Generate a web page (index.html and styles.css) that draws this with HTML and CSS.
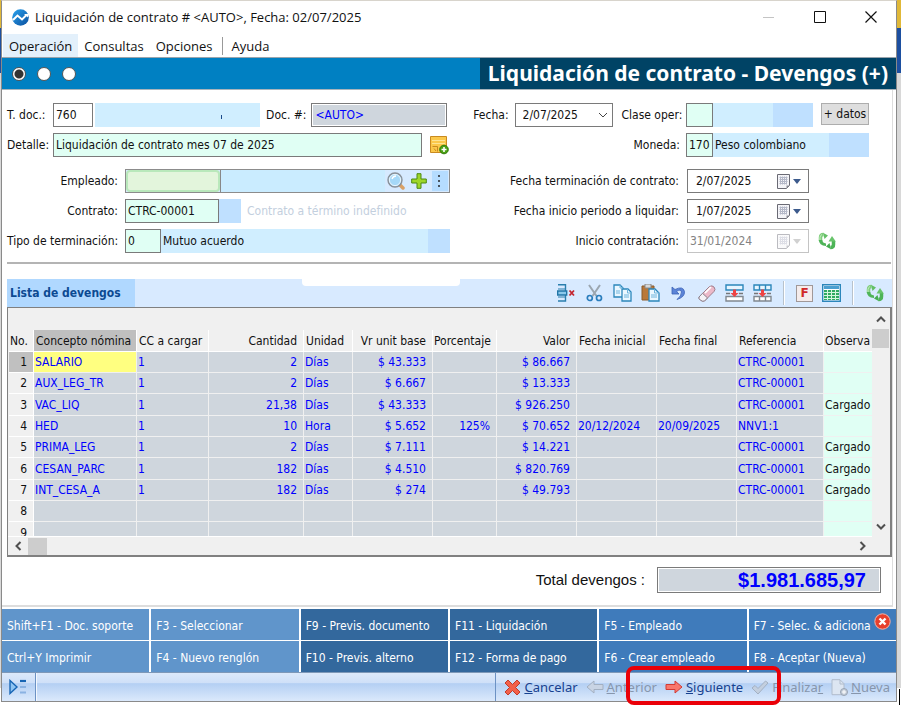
FILE: index.html
```html
<!DOCTYPE html>
<html lang="es">
<head>
<meta charset="utf-8">
<title>Liquidación de contrato</title>
<link rel="stylesheet" href="styles.css">
</head>
<body>
<svg class="defs" width="0" height="0" aria-hidden="true">
  <defs>
    <linearGradient id="gBlue" x1="0" y1="0" x2="1" y2="1"><stop offset="0" stop-color="#2aa3ee"/><stop offset="1" stop-color="#0b4f9e"/></linearGradient>
    <symbol id="refresh" viewBox="0 0 18 18">
      <path d="M2.500 9V5.500Q2.500 2.500 5.500 2.500" fill="none" stroke="#7fce7c" stroke-width="3.500"/>
      <path d="M5 .700 10 3.500 6.500 7z" fill="#63bf66"/>
      <path d="M.8 8h3.500q.2 3 3.700 3.500v2.500Q1 13.500.8 8z" fill="#4fb458"/>
      <path d="M15.500 9v3.500q0 3-3 3" fill="none" stroke="#4db457" stroke-width="3.500"/>
      <path d="M13 17.300 8 14.500l3.500-3.500z" fill="#45ad50"/>
      <path d="M10.500 9.500 14 4l3.800 5.500z" fill="#68c46b"/>
      <path d="M2 8V5.500q0-2 2-3" fill="none" stroke="#c7edc2"/>
    </symbol>
    <symbol id="cal" viewBox="0 0 13 15">
      <path d="M.5.500h12v11l-3 3H.5z" fill="#f4f4f8" stroke="#6a6a74"/>
      <path d="M2.500 3.500h8M2.500 5.500h8M2.500 7.500h8M2.500 9.500h7M3.500 2.500v8M5.500 2.500v8M7.500 2.500v8M9.500 2.500v8" stroke="#b4b8c8"/>
      <path d="M12.500 11.500h-3v3z" fill="#8a8a94"/>
    </symbol>
  </defs>
</svg>
<div class="window">
  <header class="titlebar">
    <svg width="17" height="17" viewBox="0 0 17 17"><circle cx="8.500" cy="8.500" r="8.300" fill="url(#gBlue)"/><path d="M1 11 5.500 6.500 10 10.500 15 5.500" fill="none" stroke="#fff" stroke-width="2"/><path d="M12 5h4v3.500z" fill="#fff"/></svg>
    <span class="caption">Liquidación de contrato # &lt;AUTO&gt;, Fecha: 02/07/2025</span>
    <button class="winbtn" aria-label="Minimizar"><svg width="12" height="12"><path d="M0 6.500h11" stroke="#c4c4c4"/></svg></button>
    <button class="winbtn" aria-label="Maximizar"><svg width="12" height="12"><path d="M.5.500h11v11H.5z" fill="none" stroke="#111"/></svg></button>
    <button class="winbtn" aria-label="Cerrar"><svg width="12" height="12"><path d="M.5.500 11.500 11.500M11.500.500.500 11.500" stroke="#111" stroke-width="1.200"/></svg></button>
  </header>
  <nav class="menu">
    <button class="on">Operación</button><button>Consultas</button><button>Opciones</button><i class="sep"></i><button>Ayuda</button>
  </nav>
  <div class="band">
    <div class="dots">
      <input type="radio" name="view" aria-label="Vista 1" checked><input type="radio" name="view" aria-label="Vista 2"><input type="radio" name="view" aria-label="Vista 3">
    </div>
    <h1>Liquidación de contrato - Devengos (+)</h1>
  </div>

  <main>
    <form class="form">
      <div class="col left">
        <div class="row">
          <label class="short" for="tdoc">T. doc.:</label><input id="tdoc" class="w40" value="760"><span class="fill spaced"><i class="speck"></i></span>
          <label class="inline" for="doc">Doc. #:</label><input id="doc" class="w136 locked" value="&lt;AUTO&gt;" readonly>
        </div>
        <div class="row">
          <label class="short" for="det">Detalle:</label><input id="det" class="grow mint" value="Liquidación de contrato mes 07 de 2025">
          <button type="button" class="icon note" aria-label="Agregar nota"><svg width="19" height="19" viewBox="0 0 19 19"><path d="M.5.500h16v16H.5z" fill="#fbc84a" stroke="#c98a20"/><path d="M2 4.500h13M2 7.500h13" stroke="#fde493"/><path d="M2.500 10.500h5v5M4 12.500l2 2.500" fill="none" stroke="#c98a20"/><circle cx="14" cy="13.500" r="4.300" fill="#4aa012" stroke="#2f7a08"/><path d="M11.500 13.500h5M14 11v5" stroke="#fff" stroke-width="1.600"/></svg></button>
        </div>
        <div class="row apart">
          <label class="long" for="emp">Empleado:</label>
          <div class="picker">
            <input id="emp" value=""><span class="pickname"></span>
            <button type="button" class="icon" aria-label="Buscar"><svg width="18" height="18" viewBox="0 0 18 18"><path d="M12 12l4 4" stroke="#d9a066" stroke-width="3.500" stroke-linecap="round"/><circle cx="8" cy="8" r="7" fill="#a5d8f8" stroke="#8a9098" stroke-width="1.400"/><circle cx="8" cy="8" r="5.600" fill="none" stroke="#e8f4fc"/><path d="M5 7q1-3 4-3" fill="none" stroke="#fff" stroke-width="1.300"/></svg></button>
            <button type="button" class="icon" aria-label="Agregar"><svg width="16" height="16" viewBox="0 0 16 16"><path d="M6 .7h4V6h5.300v4H10v5.300H6V10H.7V6H6z" fill="#9ed629" stroke="#4c8a10"/></svg></button>
            <button type="button" class="icon more" aria-label="Más"><svg width="3" height="12" viewBox="0 0 3 12"><path d="M0 0h2v2H0zM0 5h2v2H0zM0 10h2v2H0z" fill="#4a5560"/></svg></button>
          </div>
        </div>
        <div class="row">
          <label class="long" for="con">Contrato:</label><input id="con" class="w94 mint" value="CTRC-00001"><span class="dark w23"></span><span class="ghost">Contrato a término indefinido</span>
        </div>
        <div class="row">
          <label class="long" for="tip">Tipo de terminación:</label><input id="tip" class="w36 mint" value="0"><span class="fill">Mutuo acuerdo</span><span class="dark w23"></span>
        </div>
      </div>
      <div class="col right">
        <div class="row">
          <label class="w40 end" for="fec">Fecha:</label>
          <select id="fec"><option>2/07/2025</option></select>
          <label class="inline oper" for="cla">Clase oper:</label><input id="cla" class="w26 mint" value=""><span class="fill"></span><span class="dark w40"></span>
          <button type="button" class="datos">+ datos</button>
        </div>
        <div class="row">
          <label class="wide" for="mon">Moneda:</label><input id="mon" class="w26 mint" value="170"><span class="fill money">Peso colombiano</span><span class="dark w40"></span>
        </div>
        <div class="row apart">
          <label class="wide" for="ft">Fecha terminación de contrato:</label>
          <div class="date"><input id="ft" value="2/07/2025"><button type="button" aria-label="Calendario"><svg width="13" height="15"><use href="#cal"/></svg><svg width="8" height="5"><path d="M0 0h8L4 5z" fill="#3c5a8c"/></svg></button></div>
        </div>
        <div class="row">
          <label class="wide" for="fi">Fecha inicio periodo a liquidar:</label>
          <div class="date"><input id="fi" value="1/07/2025"><button type="button" aria-label="Calendario"><svg width="13" height="15"><use href="#cal"/></svg><svg width="8" height="5"><path d="M0 0h8L4 5z" fill="#3c5a8c"/></svg></button></div>
        </div>
        <div class="row">
          <label class="wide" for="ic">Inicio contratación:</label>
          <div class="date off"><input id="ic" value="31/01/2024" disabled><button type="button" aria-label="Calendario" disabled><svg width="13" height="15"><use href="#cal"/></svg><svg width="8" height="5"><path d="M0 0h8L4 5z" fill="#9a9a9a"/></svg></button></div>
          <button type="button" class="icon redo" aria-label="Actualizar"><svg width="18" height="18"><use href="#refresh"/></svg></button>
        </div>
      </div>
    </form>
    <hr>

    <section class="list">
      <div class="toolbar">
        <h2>Lista de devengos</h2>
        <i class="notch"></i>
        <div class="tools">
          <button aria-label="Quitar fila"><svg width="19" height="18" viewBox="0 0 19 18"><path d="M1 .700h7.500V17H1" fill="none" stroke="#2a7fae" stroke-width="1.400"/><path d="M1 5h7M1 13h7" stroke="#2a7fae"/><path d="M.7 7h9v4h-9z" fill="#8cc9ec" stroke="#2176a8" stroke-width="1.400"/><path d="M12.500 6.500l4.500 5M17 6.500l-4.500 5" stroke="#c4252f" stroke-width="1.800"/></svg></button>
          <button aria-label="Cortar"><svg width="17" height="18" viewBox="0 0 17 18"><path d="M3 1l7.500 11M14 1 6.500 12" stroke="#9ba6b0" stroke-width="2"/><circle cx="3.800" cy="14" r="2.500" fill="none" stroke="#2a7dbd" stroke-width="1.700"/><circle cx="13" cy="14" r="2.500" fill="none" stroke="#2a7dbd" stroke-width="1.700"/></svg></button>
          <button aria-label="Copiar"><svg width="19" height="18" viewBox="0 0 19 18"><path d="M1 1h6l3 3v9H1z" fill="#eaf7ff" stroke="#2b86bb" stroke-width="1.300"/><path d="M9 5h6l3 3v9H9z" fill="#eaf7ff" stroke="#2b86bb" stroke-width="1.300"/><path d="M14.500 5v4H18M7 1v3h3M3 7h4M3 9h4M11 11h5M11 13h5" fill="none" stroke="#6fb4dc"/></svg></button>
          <button aria-label="Pegar"><svg width="19" height="18" viewBox="0 0 19 18"><path d="M1 2h12v14H1z" fill="#b9783a" stroke="#8a5a2a"/><path d="M4 0h6v4H4z" fill="#d8d8d8" stroke="#888"/><path d="M8 5h6l4 4v8H8z" fill="#eaf7ff" stroke="#2b86bb" stroke-width="1.300"/><path d="M13.500 5v4H18M10 11h6M10 13h6" fill="none" stroke="#6fb4dc"/></svg></button>
          <button aria-label="Deshacer"><svg width="15" height="16" viewBox="0 0 15 16"><path d="M1 2v7h7L5.500 6.500Q10 3.500 10.500 7 10.500 11 6 14.500 14 12 13.500 6.500 12 .5 4 4.500z" fill="#5b84d8" stroke="#3b62b6" stroke-width=".8"/></svg></button>
          <button aria-label="Borrar"><svg width="18" height="17" viewBox="0 0 18 17"><path d="M1 12 11.500 1.500q2.500-1.500 4.500.5 2 2.500 0 4.500L6.500 16q-2 .7-4-.8-2-1.500-1.500-3.200z" fill="#ecb9c9" stroke="#9d7f8d"/><path d="M1 12l3.500-3.700 5 4.600L6.500 16q-2 .7-4-.8-2-1.500-1.500-3.200z" fill="#f4f2f6" stroke="#8a808c"/><path d="M7 8l6-6" stroke="#fff" stroke-width="1.700"/></svg></button>
          <button aria-label="Insertar fila"><svg width="19" height="18" viewBox="0 0 19 18"><path d="M1 1h17v5H1z" fill="#e6f5ff" stroke="#2b86bb" stroke-width="1.400"/><path d="M1 12.500h17V17H1z" fill="#fff" stroke="#808890" stroke-width="1.400"/><path d="M1 9.500h4M14 9.500h4" stroke="#777" stroke-width="1.500"/><path d="M8 5.500h3V9h2.500l-4 4-4-4H8z" fill="#ee4444"/></svg></button>
          <button aria-label="Insertar varias"><svg width="19" height="18" viewBox="0 0 19 18"><path d="M1 1h17v5H1zM6.500 1v5M12.500 1v5" fill="#e6f5ff" stroke="#2b86bb" stroke-width="1.400"/><path d="M1 12.500h17V17H1zM6.500 12.500V17M12.500 12.500V17" fill="#fff" stroke="#808890" stroke-width="1.400"/><path d="M1 9.500h4M14 9.500h4" stroke="#777" stroke-width="1.500"/><path d="M8 5.500h3V9h2.500l-4 4-4-4H8z" fill="#ee4444"/></svg></button>
          <i class="tsep"></i>
          <button class="fkey">F</button>
          <button aria-label="Hoja"><svg width="19" height="18" viewBox="0 0 19 18"><path d="M.7.700h17.600v16.600H.7z" fill="#fff" stroke="#2b86bb" stroke-width="1.400"/><path d="M2 2h15v3H2z" fill="#4a9fd0"/><path d="M2 6h15v10H2z" fill="#2faa62"/><path d="M2 8.500h15M2 11.500h15M2 14.500h15M5.500 6v10M9.500 6v10M13.500 6v10" stroke="#d5f6df"/></svg></button>
          <i class="tsep"></i>
          <button aria-label="Actualizar lista"><svg width="18" height="18"><use href="#refresh"/></svg></button>
        </div>
      </div>
      <div class="sheet">
        <div class="viewport">
          <table>
            <colgroup><col class="c1"><col class="c2"><col class="c3"><col class="c4"><col class="c5"><col class="c6"><col class="c7"><col class="c8"><col class="c9"><col class="c10"><col class="c11"><col></colgroup>
            <thead><tr><th class="n">No.</th><th class="sel">Concepto nómina</th><th>CC a cargar</th><th class="r">Cantidad</th><th>Unidad</th><th class="r">Vr unit base</th><th class="n">Porcentaje</th><th class="r">Valor</th><th>Fecha inicial</th><th>Fecha final</th><th>Referencia</th><th>Observa</th></tr></thead>
            <tbody>
              <tr class="cur"><th>1</th><td>SALARIO</td><td>1</td><td class="r">2</td><td>Días</td><td class="r">$ 43.333</td><td></td><td class="r">$ 86.667</td><td></td><td></td><td>CTRC-00001</td><td></td></tr>
              <tr><th>2</th><td>AUX_LEG_TR</td><td>1</td><td class="r">2</td><td>Días</td><td class="r">$ 6.667</td><td></td><td class="r">$ 13.333</td><td></td><td></td><td>CTRC-00001</td><td></td></tr>
              <tr><th>3</th><td>VAC_LIQ</td><td>1</td><td class="r">21,38</td><td>Días</td><td class="r">$ 43.333</td><td></td><td class="r">$ 926.250</td><td></td><td></td><td>CTRC-00001</td><td>Cargado</td></tr>
              <tr><th>4</th><td>HED</td><td>1</td><td class="r">10</td><td>Hora</td><td class="r">$ 5.652</td><td class="r">125%</td><td class="r">$ 70.652</td><td>20/12/2024</td><td>20/09/2025</td><td>NNV1:1</td><td></td></tr>
              <tr><th>5</th><td>PRIMA_LEG</td><td>1</td><td class="r">2</td><td>Días</td><td class="r">$ 7.111</td><td></td><td class="r">$ 14.221</td><td></td><td></td><td>CTRC-00001</td><td>Cargado</td></tr>
              <tr><th>6</th><td>CESAN_PARC</td><td>1</td><td class="r">182</td><td>Días</td><td class="r">$ 4.510</td><td></td><td class="r">$ 820.769</td><td></td><td></td><td>CTRC-00001</td><td>Cargado</td></tr>
              <tr><th>7</th><td>INT_CESA_A</td><td>1</td><td class="r">182</td><td>Días</td><td class="r">$ 274</td><td></td><td class="r">$ 49.793</td><td></td><td></td><td>CTRC-00001</td><td>Cargado</td></tr>
              <tr><th>8</th><td></td><td></td><td></td><td></td><td></td><td></td><td></td><td></td><td></td><td></td><td></td></tr>
              <tr><th>9</th><td></td><td></td><td></td><td></td><td></td><td></td><td></td><td></td><td></td><td></td><td></td></tr>
            </tbody>
          </table>
        </div>
        <div class="vbar">
          <svg width="10" height="7"><path d="M1 5.500 5 1.500l4 4" fill="none" stroke="#505050" stroke-width="2"/></svg>
          <i class="vthumb"></i>
          <svg width="10" height="7"><path d="M1 1.500l4 4 4-4" fill="none" stroke="#505050" stroke-width="2"/></svg>
        </div>
        <div class="hbar">
          <svg width="7" height="10"><path d="M5.500 1 1.500 5l4 4" fill="none" stroke="#505050" stroke-width="2"/></svg>
          <i class="hthumb"></i>
          <svg width="7" height="10"><path d="M1.500 1l4 4-4 4" fill="none" stroke="#505050" stroke-width="2"/></svg>
        </div>
      </div>
      <div class="total"><label for="tot">Total devengos :</label><input id="tot" value="$1.981.685,97" readonly></div>
    </section>
  </main>

  <div class="keys">
    <button class="a">Shift+F1 - Doc. soporte</button><button class="a">F3 - Seleccionar</button><button class="b">F9 - Previs. documento</button><button class="b">F11 - Liquidación</button><button class="c">F5 - Empleado</button><button class="c">F7 - Selec. &amp; adiciona</button>
    <button class="a">Ctrl+Y Imprimir</button><button class="a">F4 - Nuevo renglón</button><button class="b">F10 - Previs. alterno</button><button class="b">F12 - Forma de pago</button><button class="c">F6 - Crear empleado</button><button class="c">F8 - Aceptar (Nueva)</button>
    <svg class="closer" width="17" height="17" viewBox="0 0 17 17"><circle cx="8.500" cy="8.500" r="7.700" fill="#e8402c" stroke="#f6b4a8"/><path d="M5.500 5.500l6 6M11.500 5.500l-6 6" stroke="#fff" stroke-width="2.400"/></svg>
  </div>
  <footer class="status">
    <button class="play" aria-label="Panel"><svg width="17" height="16" viewBox="0 0 17 16"><path d="M1 1.500v13L8 8z" fill="#8fc4f2" stroke="#1765b4" stroke-width="1.400"/><path d="M11 2h6" stroke="#1765b4" stroke-width="2.200"/><path d="M11 8h6M11 13.500h6" stroke="#8ab2e2" stroke-width="2"/></svg></button>
    <span class="msg"></span>
    <div class="actions">
      <button><svg width="17" height="17" viewBox="0 0 17 17"><path d="M4 1 8.500 5.500 13 1l3 3-4.500 4.500L16 13l-3 3-4.500-4.500L4 16l-3-3 4.500-4.500L1 4z" fill="#f2604a" stroke="#c23a28"/></svg><span><u>C</u>ancelar</span></button>
      <button disabled><svg width="18" height="14" viewBox="0 0 18 14"><path d="M1 7l7-6v3.500h9v5H8V13z" fill="#c9d4e4" stroke="#a3b0c2"/></svg><span><u>A</u>nterior</span></button>
      <button class="next"><svg width="18" height="14" viewBox="0 0 18 14"><path d="M17 7l-7-6v3.500H1v5h9V13z" fill="#f9776c" stroke="#d23a34"/></svg><span><u>S</u>iguiente</span><i class="mark"></i></button>
      <button disabled><svg width="18" height="15" viewBox="0 0 18 15"><path d="M1 8l3-2.500L7 8.500 14.500 1 17 3 7 14z" fill="#c3cfdf" stroke="#a3b0c2"/></svg><span>Finaliza<u>r</u></span></button>
      <button disabled><svg width="17" height="17" viewBox="0 0 17 17"><path d="M1 .700h8l4 4v11H1z" fill="#dde6f2" stroke="#b0bccc"/><path d="M9 1v4h4" fill="none" stroke="#b0bccc"/><circle cx="13" cy="13" r="3.500" fill="#c3ccd8" stroke="#98a4b4"/><path d="M11 13h4M13 11v4" stroke="#fff"/></svg><span><u>N</u>ueva</span></button>
    </div>
  </footer>
</div>
</body>
</html>
```

FILE: styles.css
```css
* { box-sizing: border-box; }
body {
  margin: 0;
  padding: 0 4px 4px 1px;
  min-height: 100vh;
  background:
    linear-gradient(#000, #000) right 1px bottom 1px / 1px 16px no-repeat,
    linear-gradient(#e0b838 0 28px, #1c4fa0 28px 73px, #d8d8d8 73px 688px, #fff 688px);
  font-family: "DejaVu Sans Condensed", "Noto Sans", sans-serif;
  font-size: 12px;
  line-height: 16px;
  color: #111;
}
.defs { position: absolute; }
button, input, select { font: inherit; color: inherit; border-radius: 0; }
button { background: none; border: 0; padding: 0; white-space: nowrap; }
svg { display: block; flex: none; }

.window {
  border: 1px solid #8a8a8a;
  border-top-color: #d8d4cc;
  background: #fff;
  min-height: calc(100vh - 4px);
  display: flex;
  flex-direction: column;
}
.titlebar {
  display: flex;
  align-items: center;
  height: 32px;
  padding-left: 10px;
  font: 13px/18px "Open Sans", sans-serif;
}
.caption { flex: 1; padding-left: 6px; }
.winbtn { width: 51px; height: 30px; display: grid; place-items: center; }

.menu { display: flex; height: 24px; padding: 1px 1px 0; font: 13px/18px "Open Sans", sans-serif; }
.menu button { padding: 0 6px; height: 23px; }
.menu .on { background: #e3f0fb; }
.menu .sep { width: 1px; height: 18px; margin: 3px 3px 0; background: #999; }

.band {
  display: flex;
  justify-content: space-between;
  height: 33px;
  background: #0080c2;
  border-top: 1px solid #9aa4ac;
  border-bottom: 1px solid #a8b4bc;
}
.dots { display: flex; align-items: center; gap: 11px; padding-left: 10px; }
.dots input {
  appearance: none;
  width: 14px;
  height: 14px;
  margin: 0;
  border: 1px solid #555;
  border-radius: 50%;
  background: #fff;
}
.dots input:checked { background: radial-gradient(circle, #333 0 4px, #fff 5px); }
.band h1 {
  margin: 0;
  padding: 0 8px 0 8px;
  background: #004365;
  color: #fff;
  font: bold 21px/30px "Noto Sans", sans-serif;
  white-space: nowrap;
}

main { flex: 1; margin-right: 3px; padding: 13px 0 0 5px; border-right: 1px solid #ddd; border-bottom: 2px solid #ddd; }
.form { display: flex; gap: 19px; }
.col { display: flex; flex-direction: column; gap: 6px; min-width: 0; }
.left { flex: 442 1 0; }
.right { flex: 423 1 0; }
.right .row { padding-right: 23px; }
.row { display: flex; height: 24px; align-items: stretch; }
.apart { margin-top: 6px; }
.row label { line-height: 24px; white-space: nowrap; }
.row input, .row select {
  border: 1px solid #7a7a7a;
  padding: 0 2px;
  min-width: 0;
  background: #fff;
  outline: 0;
}
.short { width: 46px; flex: none; }
.long { width: 118px; flex: none; padding-right: 7px; text-align: right; }
.wide { flex: 1; text-align: right; padding-right: 6px; }
.end { text-align: right; }
.inline { padding: 0 4px 0 6px; }
.oper { padding-left: 9px; }
.w23 { width: 22px; flex: none; }
.w26 { width: 27px; flex: none; }
.w36 { width: 36px; flex: none; }
.w40 { width: 40px; flex: none; }
.w94 { width: 94px; flex: none; }
.w136 { width: 136px; flex: none; }
.grow { flex: 1; }
.row .mint { background: #e0fff4; }
.row .locked { background: #cfd6dd; color: #00f; box-shadow: inset 0 0 0 1px #fff; margin-right: 3px; padding-left: 4px; }
.fill { flex: 1; background: #d0eeff; padding-left: 2px; line-height: 24px; white-space: nowrap; }
.money { flex: 0 0 116px; }
.spaced { margin-left: 2px; }
.speck { display: block; width: 1px; height: 4px; margin: 12px 38px 0 auto; background: #1a4a8a; }
.dark { background: #bfe0ff; }
.ghost { padding-left: 6px; line-height: 24px; color: #c3cfde; white-space: nowrap; }
.icon { display: grid; place-items: center; flex: none; }
.note { width: 19px; margin: 0 1px 0 8px; }
.picker { flex: 1; display: flex; align-items: center; border: 1px solid #8c8c8c; background: #d6eaff; }
.row .picker input { width: 94px; height: 22px; border: 2px solid #b9e8bb; border-radius: 4px; background: #e3f5dc; }
.pickname { flex: 1; align-self: stretch; background: #caecff; border-left: 1px solid #888; }
.picker .icon { width: 23px; height: 20px; }
.picker .more { width: 16px; background: #b5dcff; margin: 0 1px; }
.row select { width: 98px; margin: 0 0 0 6px; padding: 0 7px; appearance: none; background: #fff url("data:image/svg+xml,%3Csvg xmlns='http://www.w3.org/2000/svg' width='10' height='6'%3E%3Cpath d='M1 1l4 4 4-4' fill='none' stroke='%23444'/%3E%3C/svg%3E") no-repeat right 4px center; }
.datos { width: 48px; height: 22px; margin-left: 8px; background: #dedede; border: 1px solid #adadad; }
.date { width: 122px; display: flex; border: 1px solid #7a7a7a; margin: 0 60px 0 2px; }
.row .date input { flex: 1; border: 0; padding-left: 8px; }
.date button { display: flex; align-items: center; gap: 3px; padding-right: 7px; }
.row .off { border-color: #c4c4c4; margin-right: 9px; }
.row .off input { color: #838383; padding-left: 2px; }
.off button { opacity: .45; }
.redo { width: 18px; margin-right: 33px; }
hr { margin: 9px 1px 0 0; border: 0; border-top: 2px solid #b4b4b4; }

.list { margin-top: 15px; }
.toolbar { position: relative; display: flex; justify-content: space-between; height: 28px; background: #d8eaff; }
.toolbar h2 { margin: 0; padding: 0 14px 0 3px; background: #b0d8ff; color: #0c4a92; font: bold 12px/28px "DejaVu Sans Condensed", sans-serif; }
.notch { position: absolute; left: 295px; top: 0; width: 158px; height: 7px; background: #fff; border-radius: 0 0 4px 4px; }
.tools { display: flex; align-items: center; gap: 9px; padding-right: 8px; }
.tools button { min-width: 19px; display: grid; place-items: center; }
.tsep { width: 2px; height: 24px; margin: 0 2px; background: #b8c2cc; border-right: 1px solid #fff; }
.tools .fkey { width: 17px; min-width: 17px; height: 17px; border: 1px solid #a09898; background: #f4ecec; color: #d02828; font: bold 12px/15px "DejaVu Sans", sans-serif; }

.sheet {
  display: grid;
  grid-template-columns: minmax(0, 1fr) 18px;
  grid-template-rows: 229px 18px;
  border: 2px solid #808080;
  border-top-width: 1px;
  border-left-width: 1px;
  background: #f0f0f0;
}
.viewport { overflow: hidden; padding: 22px 0 0 1px; border-bottom: 1px solid #fff; }
table { width: 100%; border-collapse: separate; border-spacing: 0; table-layout: fixed; }
.c1 { width: 25px; } .c2 { width: 103px; } .c3 { width: 72px; } .c4 { width: 95px; } .c5 { width: 49px; } .c6 { width: 80px; }
.c7 { width: 64px; } .c8 { width: 80px; } .c9 { width: 80px; } .c10 { width: 80px; } .c11 { width: 87px; }
th, td { height: 21px; padding: 0 2px; border-right: 1px solid #f0f0f0; border-bottom: 1px solid #f0f0f0; font-weight: normal; text-align: left; white-space: nowrap; overflow: hidden; line-height: 16px; }
td { padding-left: 1px; }
th { border-color: #fff; }
thead th { height: 22px; padding-top: 1px; }
thead .n { padding-left: 1px; padding-right: 0; }
thead .sel { background: #bfbfbf; }
tbody tr:nth-child(3n) > * { height: 22px; }
tbody th { text-align: right; padding-right: 6px; }
.cur th { background: #c0c0c0; }
td { background: #cfd6dd; color: #00f; }
.cur td:nth-child(2) { background: #ffff80; }
td:last-child { background: #e0fff4; color: #111; }
th:last-child, td:last-child { padding-left: 1px; padding-right: 0; border-right: 0; }
.r, thead .r { text-align: right; padding-right: 6px; }
.vbar { display: flex; flex-direction: column; align-items: center; padding: 8px 1px 7px 0; }
.vthumb { width: 17px; height: 19px; margin: 6px 0 auto; background: #cdcdcd; }
.hbar { grid-column: 1 / -1; display: flex; align-items: center; padding: 0 24px 0 7px; }
.hthumb { width: 19px; height: 17px; margin: 0 auto 0 6px; background: #cdcdcd; }
.total { display: flex; justify-content: flex-end; align-items: center; gap: 12px; padding: 10px 11px 0 0; font-family: "Liberation Sans", sans-serif; font-size: 15px; }
.total input { width: 224px; height: 26px; padding: 0 14px; border: 1px solid #7a7a7a; box-shadow: inset 0 0 0 1px #fff; background: #cfd6dd; color: #00f; text-align: right; font-size: 20px; font-weight: bold; }

.keys { position: relative; display: grid; grid-template-columns: repeat(6, 1fr); gap: 1px 2px; margin-top: 2px; }
.keys button { height: 31px; padding: 2px 0 0 5px; text-align: left; color: #fff; overflow: hidden; }
.a { background: #6095cb; }
.b { background: #33689d; }
.c { background: #3f7bbb; }
.closer { position: absolute; right: 5px; top: 4px; }
.status { display: flex; height: 29px; border-top: 1px solid #7e98b8; background: linear-gradient(#dce9fb 0, #cfe0f8 35%, #b4cff3 38%, #dbe9fc 100%); }
.play { width: 34px; padding-left: 7px; border-right: 1px solid #6c92c4; }
.msg { flex: 1; border-right: 1px solid #6c92c4; box-shadow: inset 1px 0 #f4f8fe; }
.actions { display: flex; gap: 8px; padding: 0 6px 0 8px; }
.actions button { position: relative; display: flex; align-items: center; gap: 3px; color: #17418f; font: 13px/18px "Noto Sans", sans-serif; }
.actions button:disabled { color: #8796ac; }
.mark { position: absolute; left: -39px; right: -38px; top: -7px; bottom: -4px; border: 4px solid #ea0008; border-radius: 8px; z-index: 1; }
```
